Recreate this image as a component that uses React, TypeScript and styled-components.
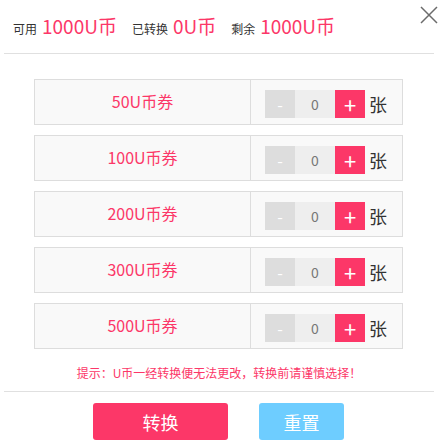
import React from "react";
import styled, { createGlobalStyle } from "styled-components";

const Global = createGlobalStyle`
  html, body { margin: 0; padding: 0; background: #fff; }
  body { font-family: "Noto Sans CJK SC", "Noto Sans", sans-serif; }
  * { box-sizing: border-box; }
`;

const Dialog = styled.div`
  position: relative;
  width: 438px;
  height: 446px;
  background: #fff;
`;

const Header = styled.div`
  display: flex;
  align-items: baseline;
  height: 54px;
  margin: 0 4px;
  padding: 12px 0 0 9px;
  border-bottom: 1px solid #e0e0e0;
`;

const Label = styled.span`
  font-size: 12px;
  color: #333;
  margin-right: 5px;
`;

const Amount = styled.span`
  font-size: 19px;
  color: #fc3768;
  margin-right: 15px;
`;

const Close = styled.button`
  position: absolute;
  top: 5px;
  right: 0px;
  width: 19px;
  height: 19px;
  padding: 0;
  border: none;
  background: transparent;
  display: flex;
  align-items: center;
  justify-content: center;
`;

const List = styled.div`
  display: flex;
  flex-direction: column;
  gap: 10px;
  margin: 25px 35px 0 34px;
`;

const Row = styled.div`
  display: flex;
  height: 46px;
  border: 1px solid #ddd;
  background: #f9f9f9;
`;

const NameCell = styled.div`
  width: 216px;
  display: flex;
  align-items: center;
  justify-content: center;
  border-right: 1px solid #ddd;
  font-size: 16px;
  color: #fc3768;
  padding-bottom: 2px;
`;

const CountCell = styled.div`
  flex: 1;
  display: flex;
  align-items: center;
  padding: 10px 0 6px 14px;
`;

const StepBtn = styled.div<{ $plus?: boolean }>`
  width: 30px;
  height: 28px;
  display: flex;
  align-items: center;
  justify-content: center;
  background: ${(p) => (p.$plus ? "#fc3768" : "#dddddd")};
  color: #fff;
  font-size: ${(p) => (p.$plus ? "22px" : "16px")};
  line-height: 1;
`;

const Qty = styled.div`
  width: 40px;
  height: 28px;
  display: flex;
  align-items: center;
  justify-content: center;
  background: #eeeeee;
  color: #777;
  font-size: 14px;
`;

const Unit = styled.span`
  margin-left: 4px;
  font-size: 18px;
  color: #333;
`;

const Hint = styled.div`
  margin: 14px 4px 0;
  padding-bottom: 8px;
  line-height: 20px;
  text-align: center;
  font-size: 12px;
  color: #fc3768;
  border-bottom: 1px solid #e0e0e0;
`;

const Actions = styled.div`
  display: flex;
  justify-content: center;
  gap: 31px;
  margin-top: 11px;
  padding-right: 1px;
`;

const ActionBtn = styled.button<{ $variant: "primary" | "secondary" }>`
  width: ${(p) => (p.$variant === "primary" ? "135px" : "85px")};
  height: 37px;
  border: none;
  border-radius: 3px;
  background: ${(p) => (p.$variant === "primary" ? "#fc3768" : "#6ecdff")};
  color: #fff;
  font-family: "Noto Sans CJK SC", sans-serif;
  font-size: 18px;
  padding: 0;
`;

const items = ["50U币券", "100U币券", "200U币券", "300U币券", "500U币券"];

export default function App() {
  return (
    <>
      <Global />
      <Dialog>
        <Header>
          <Label>可用</Label>
          <Amount>1000U币</Amount>
          <Label>已转换</Label>
          <Amount>0U币</Amount>
          <Label>剩余</Label>
          <Amount>1000U币</Amount>
        </Header>
        <Close aria-label="close">
          <svg width="18" height="18" viewBox="0 0 18 18">
            <path d="M1 1 L17 17 M17 1 L1 17" stroke="#6b6b6b" strokeWidth="1.5" fill="none" />
          </svg>
        </Close>
        <List>
          {items.map((name) => (
            <Row key={name}>
              <NameCell>{name}</NameCell>
              <CountCell>
                <StepBtn>-</StepBtn>
                <Qty>0</Qty>
                <StepBtn $plus>+</StepBtn>
                <Unit>张</Unit>
              </CountCell>
            </Row>
          ))}
        </List>
        <Hint>提示：U币一经转换便无法更改，转换前请谨慎选择！</Hint>
        <Actions>
          <ActionBtn $variant="primary">转换</ActionBtn>
          <ActionBtn $variant="secondary">重置</ActionBtn>
        </Actions>
      </Dialog>
    </>
  );
}
